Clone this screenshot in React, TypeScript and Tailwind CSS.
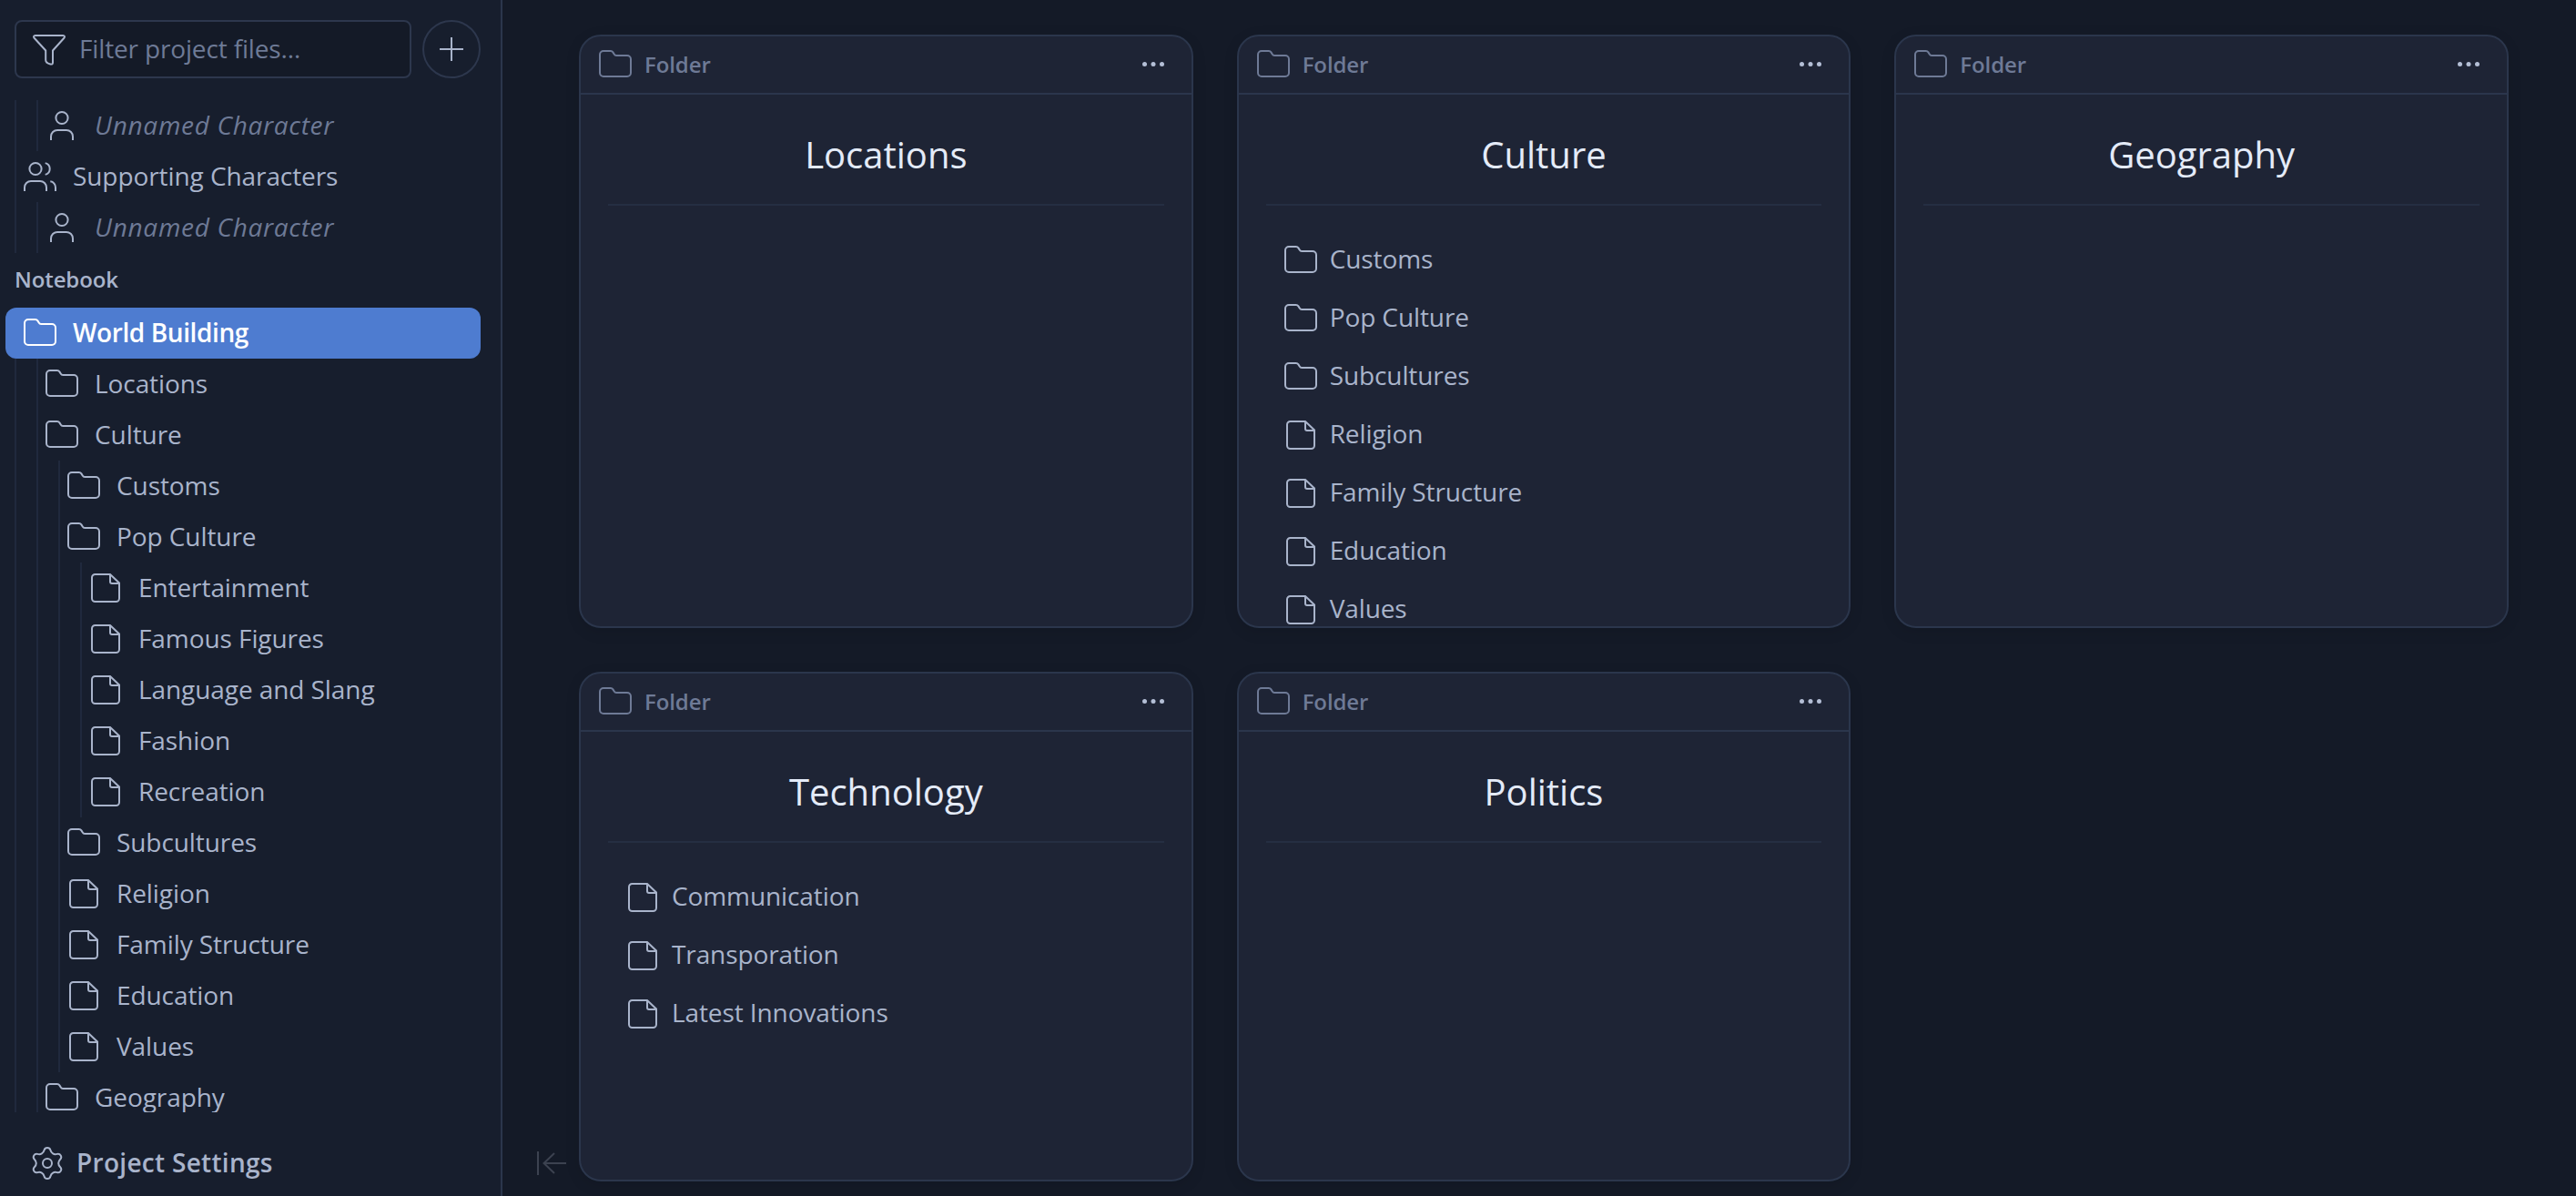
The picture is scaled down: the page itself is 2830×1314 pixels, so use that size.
import type { ReactNode } from "react";
import clsx from "clsx";

type IconName = "folder" | "file" | "person" | "people";

const iconPaths: Record<IconName, ReactNode> = {
  folder: (
    <path d="M3 9a4 4 0 0 1 4-4h7.8c1.2 0 2 .5 2.6 1.4l1.3 2.2c.5.9 1.3 1.4 2.4 1.4H33a4 4 0 0 1 4 4v15a4 4 0 0 1-4 4H7a4 4 0 0 1-4-4z" />
  ),
  file: (
    <>
      <path d="M25 5H8.5A3.5 3.5 0 0 0 5 8.5v23A3.5 3.5 0 0 0 8.5 35h23a3.5 3.5 0 0 0 3.5-3.5v-17z" />
      <path d="M25 5v8a2 2 0 0 0 2 2h8" />
    </>
  ),
  person: (
    <>
      <circle cx="20" cy="11.5" r="6.6" />
      <path d="M8 36v-4a7 7 0 0 1 7-7h10a7 7 0 0 1 7 7v4" />
    </>
  ),
  people: (
    <>
      <circle cx="15" cy="11.5" r="6.6" />
      <path d="M3 36v-4a7 7 0 0 1 7-7h10a7 7 0 0 1 7 7v4" />
      <path d="M25.7 5.1a6.6 6.6 0 0 1 0 12.8M31.3 25.3A6.5 6.5 0 0 1 37 32v4" />
    </>
  ),
};

function Icon({ name }: { name: IconName }) {
  return (
    <svg className="size-10 shrink-0" viewBox="0 0 40 40" fill="none" stroke="currentColor" strokeWidth="2" aria-hidden="true">
      {iconPaths[name]}
    </svg>
  );
}

// Six-lobed gear outline, one tooth tip every 60 degrees
function gearPath() {
  const at = (deg: number, r: number, t: number) => {
    const a = (deg * Math.PI) / 180;
    const x = 20 + r * Math.cos(a) - t * Math.sin(a);
    const y = 20 + r * Math.sin(a) + t * Math.cos(a);
    return `${x.toFixed(2)} ${y.toFixed(2)}`;
  };
  let d = `M${at(-90, 17, 0)}`;
  for (let i = 0; i < 6; i++) {
    const a = -90 + i * 60;
    d += `C${at(a, 17, 5)} ${at(a + 30, 12.2, -5)} ${at(a + 30, 12.2, 0)}`;
    d += `C${at(a + 30, 12.2, 5)} ${at(a + 60, 17, -5)} ${at(a + 60, 17, 0)}`;
  }
  return d + "Z";
}

type TreeItem = { label: string; icon: IconName; level: number; unnamed?: boolean };

const characters: TreeItem[] = [
  { label: "Unnamed Character", icon: "person", level: 2, unnamed: true },
  { label: "Supporting Characters", icon: "people", level: 1 },
  { label: "Unnamed Character", icon: "person", level: 2, unnamed: true },
];

const notebook: TreeItem[] = [
  { label: "Locations", icon: "folder", level: 2 },
  { label: "Culture", icon: "folder", level: 2 },
  { label: "Customs", icon: "folder", level: 3 },
  { label: "Pop Culture", icon: "folder", level: 3 },
  { label: "Entertainment", icon: "file", level: 4 },
  { label: "Famous Figures", icon: "file", level: 4 },
  { label: "Language and Slang", icon: "file", level: 4 },
  { label: "Fashion", icon: "file", level: 4 },
  { label: "Recreation", icon: "file", level: 4 },
  { label: "Subcultures", icon: "folder", level: 3 },
  { label: "Religion", icon: "file", level: 3 },
  { label: "Family Structure", icon: "file", level: 3 },
  { label: "Education", icon: "file", level: 3 },
  { label: "Values", icon: "file", level: 3 },
  { label: "Geography", icon: "folder", level: 2 },
];

type Card = { title: string; items: { label: string; icon: IconName }[] };

const cards: Card[] = [
  { title: "Locations", items: [] },
  {
    title: "Culture",
    items: [
      { label: "Customs", icon: "folder" },
      { label: "Pop Culture", icon: "folder" },
      { label: "Subcultures", icon: "folder" },
      { label: "Religion", icon: "file" },
      { label: "Family Structure", icon: "file" },
      { label: "Education", icon: "file" },
      { label: "Values", icon: "file" },
    ],
  },
  { title: "Geography", items: [] },
  {
    title: "Technology",
    items: [
      { label: "Communication", icon: "file" },
      { label: "Transporation", icon: "file" },
      { label: "Latest Innovations", icon: "file" },
    ],
  },
  { title: "Politics", items: [] },
];

function TreeRow({ label, icon, level, unnamed }: TreeItem) {
  return (
    <li className="flex h-14 shrink-0 items-center pl-4">
      {Array.from({ length: level }, (_, i) => (
        <span key={i} className={clsx("h-full shrink-0 border-l-2 border-[#20293d]", i === level - 1 ? "w-2" : "w-6")} />
      ))}
      <Icon name={icon} />
      <span className={clsx("ml-4 pb-[3px]", unnamed ? "italic tracking-[0.7px] text-[#6e7a96]" : "tracking-[-0.08px]")}>
        {label}
      </span>
    </li>
  );
}

function Sidebar() {
  return (
    <aside className="flex h-full w-[552px] shrink-0 flex-col border-r-2 border-[#2b364c] bg-[#171e2d]">
      {/* Filter + add */}
      <div className="flex gap-3 px-4 pt-[22px]">
        <div className="flex h-16 w-[436px] items-center rounded-lg border-2 border-[#2d374d] bg-[#141a27] pl-4">
          <svg className="size-10 shrink-0" viewBox="0 0 40 40" fill="none" stroke="currentColor" strokeWidth="2" strokeLinejoin="round" aria-hidden="true">
            <path d="M4.8 5h30.4c1.8 0 2.3 1.6 1.2 2.8L24 21.5v13.2c0 1.6-1 2.2-2.6 1.8-3.3-.8-5.2-2.2-5.2-4.5V21.5L3.6 7.8C2.5 6.6 3 5 4.8 5z" />
          </svg>
          <span className="ml-[13px] pb-[3px] tracking-[-0.15px] text-[#6e7a96]">Filter project files…</span>
        </div>
        <button aria-label="Add" className="grid size-16 place-items-center rounded-full border-2 border-[#2d374d]">
          <svg className="size-[26px]" viewBox="0 0 26 26" stroke="currentColor" strokeWidth="2" aria-hidden="true">
            <path d="M13 0v26M0 13h26" />
          </svg>
        </button>
      </div>

      {/* Project tree */}
      <nav className="mt-6 h-[1112px] shrink-0 overflow-hidden">
        <ul className="flex flex-col">
          {characters.map((item, i) => (
            <TreeRow key={i} {...item} />
          ))}
        </ul>
        <h2 className="flex h-[60px] items-center pb-0.5 pl-4 text-2xl font-semibold tracking-[-0.1px]">Notebook</h2>
        <div className="ml-1.5 flex h-14 w-[522px] items-center rounded-xl bg-[#4e7cd0] pl-[18px] text-white">
          <Icon name="folder" />
          <span className="ml-4 pb-[3px] font-semibold tracking-[-0.4px]">World Building</span>
        </div>
        <ul className="flex flex-col">
          {notebook.map((item) => (
            <TreeRow key={item.label} {...item} />
          ))}
        </ul>
      </nav>

      <div className="flex flex-1 items-center pt-5 pl-8">
        <svg className="size-10 shrink-0" viewBox="0 0 40 40" fill="none" stroke="currentColor" strokeWidth="2" aria-hidden="true">
          <path d={gearPath()} />
          <circle cx="20" cy="20" r="5" />
        </svg>
        <span className="ml-3 pb-[3px] font-semibold tracking-[0.3px]">Project Settings</span>
      </div>
    </aside>
  );
}

function FolderCard({ title, items }: Card) {
  return (
    <section className="flex min-h-0 flex-col overflow-hidden rounded-3xl border-2 border-[#2b364c] bg-[#1e2435] shadow-[0_4px_16px_rgba(0,0,0,0.1)]">
      <header className="flex h-16 shrink-0 items-center border-b-2 border-[#2b364c] pl-[18px] pr-[30px] text-[#6e7a96]">
        <Icon name="folder" />
        <span className="ml-3 pb-px text-2xl font-semibold tracking-[-0.1px]">Folder</span>
        <svg className="mb-0.5 ml-auto h-[5px] w-6 text-[#b4bfd6]" viewBox="0 0 24 5" fill="currentColor" aria-hidden="true">
          <circle cx="2.5" cy="2.5" r="2.5" />
          <circle cx="12" cy="2.5" r="2.5" />
          <circle cx="21.5" cy="2.5" r="2.5" />
        </svg>
      </header>
      <h3 className="mx-[30px] flex h-[122px] shrink-0 items-center justify-center border-b-2 border-[#252e42] pt-3 text-[40px] leading-none text-[#e4ebf8]">
        {title}
      </h3>
      <ul className="flex flex-col pt-7 pl-12">
        {items.map(({ label, icon }) => (
          <li key={label} className="flex h-16 shrink-0 items-center">
            <Icon name={icon} />
            <span className="ml-3 pb-[5px] tracking-[-0.1px]">{label}</span>
          </li>
        ))}
      </ul>
    </section>
  );
}

export default function App() {
  return (
    <div className="flex h-[1314px] w-[2830px] overflow-hidden bg-[#141a27] font-['Open_Sans',sans-serif] text-[28px] leading-9 text-[#a9b4cb]">
      <Sidebar />
      <div className="flex w-[84px] shrink-0 items-end pb-4 pl-[38px]">
        <svg className="h-10 w-8" viewBox="0 0 32 40" fill="none" stroke="#3c4250" strokeWidth="2" aria-hidden="true">
          <path d="M1 7v26M32 20H7M19 9 7.5 20 19 31" />
        </svg>
      </div>
      <main className="grid w-[2120px] grid-cols-3 grid-rows-[652px_560px] gap-12 pt-[38px]">
        {cards.map((card) => (
          <FolderCard key={card.title} {...card} />
        ))}
      </main>
    </div>
  );
}
